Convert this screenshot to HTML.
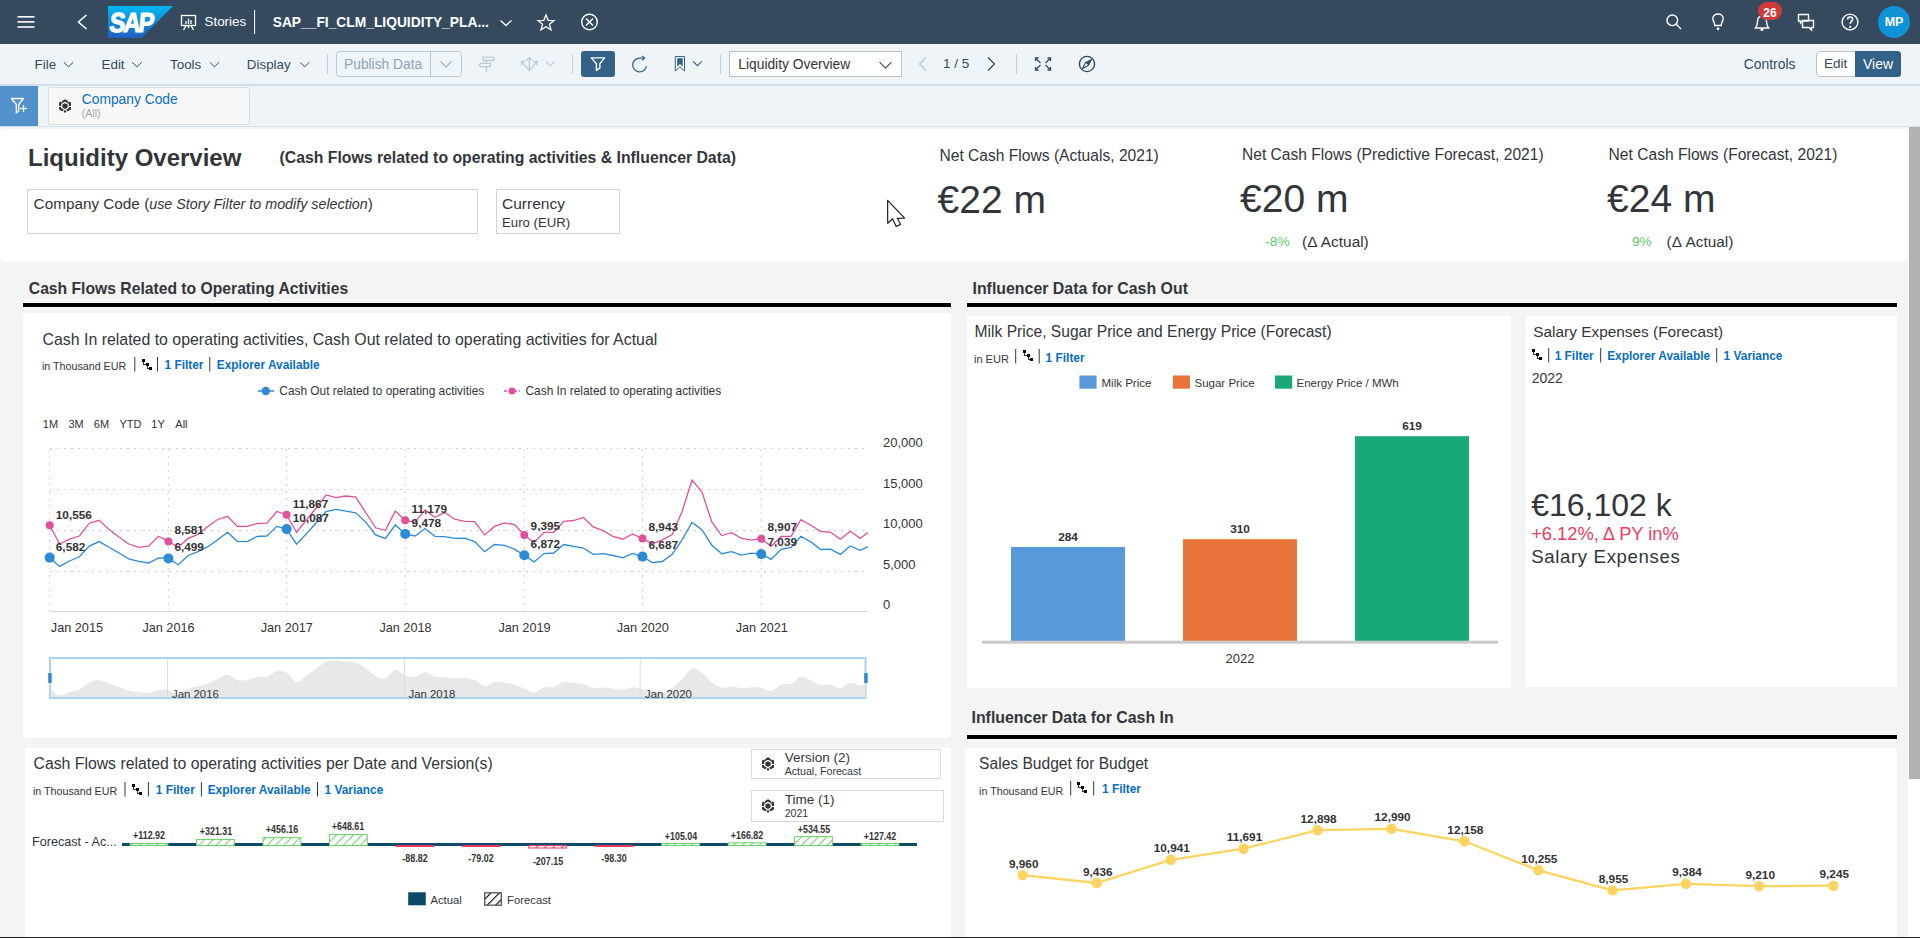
<!DOCTYPE html>
<html><head><meta charset="utf-8"><title>Liquidity Overview</title>
<style>
html,body{margin:0;padding:0;width:1920px;height:938px;overflow:hidden;background:#f4f4f4;}
body{position:relative;font-family:"Liberation Sans",sans-serif;color:#32363a;}
.t{position:absolute;white-space:nowrap;}
.r{position:absolute;}
svg text{font-family:"Liberation Sans",sans-serif;}
</style></head><body>
<div class="r" style="left:0px;top:0px;width:1920px;height:44px;background:#354a5f;"></div>
<svg class="r" style="left:0;top:0" width="1920" height="44" viewBox="0 0 1920 44">
<g stroke="#ffffff" stroke-width="1.6" fill="none" stroke-linecap="butt">
<line x1="17.5" y1="16.8" x2="34.5" y2="16.8"/><line x1="17.5" y1="21.9" x2="34.5" y2="21.9"/><line x1="17.5" y1="27" x2="34.5" y2="27"/>
<polyline points="86.5,15 78.5,22 86.5,29"/>
</g>
<defs><linearGradient id="sapg" x1="0" y1="0" x2="0" y2="1"><stop offset="0" stop-color="#00b8f1"/><stop offset="1" stop-color="#1e5fbf"/></linearGradient></defs>
<polygon points="108,6 173,6 141.5,38 108,38" fill="url(#sapg)"/>
<text x="0" y="0" font-family="Liberation Sans" font-weight="bold" font-size="27.5" fill="#fff" stroke="#fff" stroke-width="1.1" letter-spacing="-2.2" transform="translate(108.8,31.6) scale(0.86,1) skewX(-7)">SAP</text>
<!-- stories icon -->
<g stroke="#ffffff" stroke-width="1.3" fill="none">
<rect x="181.5" y="15.5" width="14" height="10"/>
<line x1="186" y1="25.5" x2="183.5" y2="30"/><line x1="191" y1="25.5" x2="193.5" y2="30"/><line x1="188.5" y1="25.5" x2="188.5" y2="28"/>
<line x1="186" y1="24" x2="186" y2="21"/><line x1="188.5" y1="24" x2="188.5" y2="18.5"/><line x1="191" y1="24" x2="191" y2="20"/>
</g>
<line x1="254.6" y1="10" x2="254.6" y2="34" stroke="#ffffff" stroke-width="1"/>
<polyline points="500.5,20.5 506,25.5 511.5,20.5" stroke="#ffffff" stroke-width="1.3" fill="none"/>
<polygon points="546,15 548.2,20.3 554,20.6 549.5,24.3 551,29.8 546,26.7 541,29.8 542.5,24.3 538,20.6 543.8,20.3" stroke="#ffffff" stroke-width="1.3" fill="none" stroke-linejoin="miter"/>
<circle cx="589.5" cy="22" r="7.8" stroke="#ffffff" stroke-width="1.4" fill="none"/>
<g stroke="#ffffff" stroke-width="1.5"><line x1="586" y1="18.5" x2="593" y2="25.5"/><line x1="593" y1="18.5" x2="586" y2="25.5"/></g>
<!-- right icons -->
<g stroke="#ffffff" stroke-width="1.4" fill="none">
<circle cx="1672.3" cy="20.3" r="5.3"/><line x1="1676" y1="24" x2="1681" y2="29"/>
<path d="M1714.8,25.5 C1714.8,22.5 1712.8,21 1712.8,18.5 C1712.8,15.8 1715.2,14 1718,14 C1720.8,14 1723.2,15.8 1723.2,18.5 C1723.2,21 1721.2,22.5 1721.2,25.5 Z"/>
<path d="M1755.5,28 L1768.5,28 C1767,26 1766.5,24.5 1766.5,21.5 C1766.5,18 1764.5,16.2 1762,16.2 C1759.5,16.2 1757.5,18 1757.5,21.5 C1757.5,24.5 1757,26 1755.5,28 Z"/>
<path d="M1798.5,14.5 h10 v6.5 h-6 l-2,2 v-2 h-2 z"/>
<path d="M1802.5,20.5 h11 v7 h-2 v2.5 l-2.5,-2.5 h-6.5 z"/>
<circle cx="1850" cy="22" r="7.9"/>
<path d="M1847.6,19.6 C1847.6,17.9 1848.7,17 1850.1,17 C1851.6,17 1852.6,18 1852.6,19.3 C1852.6,21.2 1850.2,21.5 1850.2,23.8" stroke-width="1.7"/>
</g>
<circle cx="1718" cy="28.8" r="1.4" fill="#ffffff"/>
<circle cx="1762" cy="29.5" r="1.5" fill="#ffffff"/>
<circle cx="1850.2" cy="26.8" r="1.1" fill="#ffffff"/>
<rect x="1758" y="2" width="24" height="18" rx="9" fill="#d13a3a"/>
<circle cx="1894" cy="22" r="16" fill="#0f93d6"/>
</svg>
<div class="t" style="left:204.5px;top:15.25px;font-size:13.4px;line-height:13.4px;color:#fff;">Stories</div>
<div class="t" style="left:272.7px;top:16.10px;font-size:13.8px;line-height:13.8px;color:#fff;font-weight:bold;">SAP__FI_CLM_LIQUIDITY_PLA...</div>
<div class="t" style="left:1570.0px;width:400px;text-align:center;top:7.23px;font-size:12px;line-height:12px;color:#fff;font-weight:bold;">26</div>
<div class="t" style="left:1694.0px;width:400px;text-align:center;top:15.87px;font-size:12.5px;line-height:12.5px;color:#fff;font-weight:bold;">MP</div>
<div class="r" style="left:0px;top:44px;width:1920px;height:42px;background:#eff4f9;border-bottom:2px solid #d2deea;box-sizing:border-box;"></div>
<div class="t" style="left:34.5px;top:57.85px;font-size:13.4px;line-height:13.4px;color:#354a5f;">File</div>
<div class="t" style="left:101.5px;top:57.85px;font-size:13.4px;line-height:13.4px;color:#354a5f;">Edit</div>
<div class="t" style="left:170.0px;top:57.85px;font-size:13.4px;line-height:13.4px;color:#354a5f;">Tools</div>
<div class="t" style="left:246.8px;top:57.85px;font-size:13.4px;line-height:13.4px;color:#354a5f;">Display</div>
<svg class="r" style="left:0;top:44px" width="1920" height="41" viewBox="0 44 1920 41">
<g stroke="#354a5f" stroke-width="1" fill="none">
<polyline points="63.8,62.3 68.5,66.8 73.2,62.3"/><polyline points="132.2,62.3 137,66.8 141.8,62.3"/><polyline points="209.9,62.3 214.5,66.8 219.1,62.3"/><polyline points="300.2,62.3 304.7,66.8 309.2,62.3"/>
</g>
<line x1="327.5" y1="54.5" x2="327.5" y2="74" stroke="#c5d2de" stroke-width="1"/>
<rect x="336.5" y="51.5" width="125" height="25" rx="3" fill="#eff4f9" stroke="#b8c8d8" stroke-width="1"/>
<line x1="430.5" y1="51.5" x2="430.5" y2="76.5" stroke="#b8c8d8" stroke-width="1"/>
<polyline points="440.5,61.5 446,67 451.5,61.5" stroke="#9db1c4" stroke-width="1.1" fill="none"/>
<!-- signpost -->
<g stroke="#bccbd9" stroke-width="1.3" fill="none">
<path d="M483.2,57.1 H493.2 L494.7,58.8 L493.2,60.5 H483.2 Z"/><path d="M490.4,63.3 H480.7 L479.2,65 L480.7,66.7 H490.4 Z"/>
<line x1="486.5" y1="60.5" x2="486.5" y2="63.3"/><line x1="486.5" y1="66.7" x2="486.5" y2="71.7"/>
</g>
<!-- move icon -->
<g stroke="#bccbd9" stroke-width="1.3" fill="none">
<line x1="529.3" y1="57.6" x2="529.3" y2="70.6"/><polyline points="526.4,60.5 529.3,57.6 532.2,60.5"/>
<line x1="529.3" y1="70.6" x2="521.7" y2="61.6"/><polyline points="521.4,65.6 521.4,61.3 525.7,61.3"/>
<line x1="529.3" y1="70.6" x2="536.9" y2="61.6"/><polyline points="532.9,61.3 537.2,61.3 537.2,65.6"/>
</g>
<polyline points="546,61.5 550.3,65.8 554.6,61.5" stroke="#bccbd9" stroke-width="1.1" fill="none"/>
<line x1="572.5" y1="54.5" x2="572.5" y2="74" stroke="#c5d2de" stroke-width="1"/>
<rect x="581" y="51" width="34" height="26" rx="3" fill="#346187"/>
<path d="M591.3,57.9 H604.6 L599.9,63.8 V67.9 L596.4,70.4 V63.8 Z" stroke="#fff" stroke-width="1.4" fill="none" stroke-linejoin="round"/>
<!-- refresh -->
<path d="M646.4,66.2 A6.9,6.9 0 1 1 639.6,58.1 H644.3" stroke="#346187" stroke-width="1.25" fill="none"/>
<polyline points="642.2,55.9 644.6,58.1 642.2,60.4" stroke="#346187" stroke-width="1.25" fill="none"/>
<!-- bookmark -->
<path d="M675.3,56.5 H684.5 V71 L679.9,66.9 L675.3,71 Z" stroke="#346187" stroke-width="1" fill="none"/>
<path d="M677.2,58.2 H682.7 V66.6 L679.95,64.1 L677.2,66.6 Z" fill="#346187"/>
<polyline points="693,61.3 697.4,65.7 701.8,61.3" stroke="#346187" stroke-width="1.1" fill="none"/>
<line x1="720.5" y1="54.5" x2="720.5" y2="74" stroke="#c5d2de" stroke-width="1"/>
<rect x="729.5" y="51.5" width="172" height="25" fill="#fff" stroke="#bfbfbf" stroke-width="1"/>
<polyline points="879.5,62 885.5,68 891.5,62" stroke="#32363a" stroke-width="1.05" fill="none"/>
<polyline points="926,57.5 919.5,64 926,70.5" stroke="#b9c6d3" stroke-width="1.2" fill="none"/>
<polyline points="988,57.5 994.5,64 988,70.5" stroke="#354a5f" stroke-width="1.2" fill="none"/>
<line x1="1016.5" y1="54.5" x2="1016.5" y2="74" stroke="#c5d2de" stroke-width="1"/>
<!-- fullscreen -->
<g stroke="#354a5f" stroke-width="1.3" fill="none">
<polyline points="1035.5,61 1035.5,58 1038.5,58"/><polyline points="1047.5,58 1050.5,58 1050.5,61"/>
<polyline points="1035.5,67 1035.5,70 1038.5,70"/><polyline points="1047.5,70 1050.5,70 1050.5,67"/>
<line x1="1036" y1="58.5" x2="1040.5" y2="63"/><line x1="1050" y1="58.5" x2="1045.5" y2="63"/>
<line x1="1036" y1="69.5" x2="1040.5" y2="65"/><line x1="1050" y1="69.5" x2="1045.5" y2="65"/>
</g>
<!-- compass -->
<circle cx="1087" cy="64" r="7.6" stroke="#354a5f" stroke-width="1.4" fill="none"/>
<path d="M1091.5,59.5 L1088.6,65.2 L1082.5,68.5 L1085.4,62.8 Z" stroke="#354a5f" stroke-width="1.1" fill="none" stroke-linejoin="round"/><path d="M1091.5,59.5 L1088.6,65.2 L1085.4,62.8 Z" fill="#354a5f"/>
<rect x="1816.5" y="51.5" width="84" height="25" rx="3.5" fill="#fff" stroke="#bfbfbf" stroke-width="1"/>
<path d="M1855,51 h42.5 a3.5,3.5 0 0 1 3.5,3.5 v19 a3.5,3.5 0 0 1 -3.5,3.5 h-42.5 z" fill="#346187"/>
</svg>
<div class="t" style="left:344.0px;top:58.00px;font-size:13.8px;line-height:13.8px;color:#8fa3b7;">Publish Data</div>
<div class="t" style="left:738.3px;top:58.20px;font-size:13.8px;line-height:13.8px;color:#32363a;">Liquidity Overview</div>
<div class="t" style="left:943.0px;top:57.24px;font-size:13.5px;line-height:13.5px;color:#354a5f;">1 / 5</div>
<div class="t" style="left:1743.7px;top:57.79px;font-size:13.9px;line-height:13.9px;color:#354a5f;">Controls</div>
<div class="t" style="left:1824.0px;top:57.04px;font-size:13.5px;line-height:13.5px;color:#354a5f;">Edit</div>
<div class="t" style="left:1863.0px;top:56.97px;font-size:14px;line-height:14px;color:#fff;">View</div>
<div class="r" style="left:0px;top:86px;width:1920px;height:41px;background:#eff4f9;border-bottom:1px solid #d5e1ec;box-sizing:border-box;"></div>
<div class="r" style="left:0px;top:86px;width:38px;height:40px;background:#5391cd;"></div>
<svg class="r" style="left:0;top:85px" width="260" height="41" viewBox="0 85 260 41">
<path d="M11.5,98.5 h12 l-4.8,6 v6.5 l-2.4,1.8 v-8.3 z" stroke="#fff" stroke-width="1.3" fill="none" stroke-linejoin="round"/>
<g stroke="#fff" stroke-width="1.3"><line x1="20" y1="108.5" x2="27" y2="108.5"/><line x1="23.5" y1="105" x2="23.5" y2="112"/></g>
<rect x="48.5" y="87.5" width="201" height="37" rx="2" fill="#f7f7f7" stroke="#dedede" stroke-width="1"/>
</svg>
<svg class="r" style="left:57.2px;top:97.7px" width="16" height="16" viewBox="-8 -8 16 16">
<path d="M0,-5.6 L4.9,-2.8 L4.9,2.8 L0,5.6 L-4.9,2.8 L-4.9,-2.8 Z" fill="none" stroke="#32363a" stroke-width="2.2"/>
<g stroke="#fff" stroke-width="1.1"><line x1="-2.5" y1="-6.5" x2="-4" y2="-3.8"/><line x1="2.5" y1="-6.5" x2="4" y2="-3.8"/><line x1="-6" y1="0.5" x2="-3.5" y2="0.5"/><line x1="6" y1="0.5" x2="3.5" y2="0.5"/><line x1="-2.5" y1="6.5" x2="-1" y2="4"/><line x1="2.5" y1="6.5" x2="1" y2="4"/></g>
<path d="M0,-2.8 L2.6,-1.4 L2.6,1.6 L0,3 L-2.6,1.6 L-2.6,-1.4 Z" fill="#32363a"/>
</svg>
<div class="t" style="left:81.8px;top:92.50px;font-size:13.8px;line-height:13.8px;color:#0a6ec0;">Company Code</div>
<div class="t" style="left:81.8px;top:108.13px;font-size:10.5px;line-height:10.5px;color:#a5a5a5;">(All)</div>
<div class="r" style="left:0px;top:127px;width:1920px;height:811px;background:#f4f4f4;"></div>
<div class="r" style="left:0px;top:129px;width:1908px;height:133px;background:#fff;border-radius:5px;"></div>
<div class="t" style="left:28.0px;top:146.07px;font-size:24px;line-height:24px;color:#32363a;font-weight:bold;">Liquidity Overview</div>
<div class="t" style="left:279.5px;top:149.94px;font-size:15.8px;line-height:15.8px;color:#32363a;font-weight:bold;">(Cash Flows related to operating activities &amp; Influencer Data)</div>
<div class="r" style="left:27px;top:189px;width:451px;height:45px;border:1px solid #d4d4d4;box-sizing:border-box;background:#fff;"></div>
<div class="t" style="left:33.6px;top:196.40px;font-size:15.3px;line-height:15.3px;color:#32363a;">Company Code (<i style="font-size:14.3px">use Story Filter to modify selection</i>)</div>
<div class="r" style="left:496px;top:189px;width:124px;height:45px;border:1px solid #d4d4d4;box-sizing:border-box;background:#fff;"></div>
<div class="t" style="left:502.0px;top:196.28px;font-size:15.5px;line-height:15.5px;color:#32363a;">Currency</div>
<div class="t" style="left:502.0px;top:216.08px;font-size:13.2px;line-height:13.2px;color:#32363a;">Euro (EUR)</div>
<div class="t" style="left:939.5px;top:148.16px;font-size:15.6px;line-height:15.6px;color:#32363a;">Net Cash Flows (Actuals, 2021)</div>
<div class="t" style="left:937.5px;top:179.91px;font-size:39px;line-height:39px;color:#32363a;">€22 m</div>
<div class="t" style="left:1242.0px;top:147.36px;font-size:15.6px;line-height:15.6px;color:#32363a;">Net Cash Flows (Predictive Forecast, 2021)</div>
<div class="t" style="left:1240.0px;top:179.21px;font-size:39px;line-height:39px;color:#32363a;">€20 m</div>
<div class="t" style="left:1265.3px;top:234.53px;font-size:13.6px;line-height:13.6px;color:#5dc86a;">-8%</div>
<div class="t" style="left:1302.0px;top:234.29px;font-size:15.4px;line-height:15.4px;color:#32363a;">(Δ Actual)</div>
<div class="t" style="left:1608.6px;top:147.36px;font-size:15.6px;line-height:15.6px;color:#32363a;">Net Cash Flows (Forecast, 2021)</div>
<div class="t" style="left:1607.0px;top:179.21px;font-size:39px;line-height:39px;color:#32363a;">€24 m</div>
<div class="t" style="left:1632.0px;top:234.53px;font-size:13.6px;line-height:13.6px;color:#5dc86a;">9%</div>
<div class="t" style="left:1666.6px;top:234.29px;font-size:15.4px;line-height:15.4px;color:#32363a;">(Δ Actual)</div>
<svg class="r" style="left:884px;top:197px" width="24" height="32" viewBox="0 0 24 32">
<path d="M3.6,3.4 L3.7,26.2 L8.6,21.8 L12.2,29.4 L16.6,27.5 L13.4,21.3 L20.6,21.1 Z" fill="#fff" stroke="#1e1e28" stroke-width="1.2" stroke-linejoin="round"/></svg>
<div class="r" style="left:1908px;top:127px;width:12px;height:811px;background:#fff;"></div>
<div class="r" style="left:1909px;top:127px;width:11px;height:652px;background:#b2b2b2;"></div>
<div class="t" style="left:28.8px;top:281.15px;font-size:15.7px;line-height:15.7px;color:#32363a;font-weight:bold;">Cash Flows Related to Operating Activities</div>
<div class="r" style="left:22px;top:302px;width:930px;height:6px;background:#000;border:1px solid #fff;box-sizing:border-box;"></div>
<div class="r" style="left:23px;top:313px;width:928px;height:425px;background:#fff;border-radius:4px;"></div>
<div class="t" style="left:42.5px;top:332.43px;font-size:15.9px;line-height:15.9px;color:#32363a;">Cash In related to operating activities, Cash Out related to operating activities for Actual</div>
<div class="t" style="left:42.0px;top:361.40px;font-size:10.7px;line-height:10.7px;color:#32363a;">in Thousand EUR</div>
<svg class="r" style="left:114.5px;top:349.5px" width="600" height="30" viewBox="114.5 349.5 600 30">
<line x1="134.3" y1="356.5" x2="134.3" y2="371.0" stroke="#32363a" stroke-width="1"/>
<line x1="157.0" y1="356.5" x2="157.0" y2="371.0" stroke="#32363a" stroke-width="1"/>
<line x1="209.3" y1="356.5" x2="209.3" y2="371.0" stroke="#32363a" stroke-width="1"/>
<g fill="#000" shape-rendering="crispEdges"><rect x="141" y="358" width="3" height="3"/><rect x="145" y="362" width="3" height="3"/><rect x="148" y="366" width="3" height="3"/></g><g stroke="#333" stroke-width="1" fill="none" shape-rendering="crispEdges"><polyline points="142.5,361 142.5,363.5 145,363.5"/><polyline points="146.5,365 146.5,367.5 148,367.5"/></g>
</svg>
<div class="t" style="left:164.5px;top:359.85px;font-size:11.9px;line-height:11.9px;color:#0a6ec0;font-weight:bold;">1 Filter</div>
<div class="t" style="left:216.8px;top:359.85px;font-size:11.9px;line-height:11.9px;color:#0a6ec0;font-weight:bold;">Explorer Available</div>
<svg class="r" style="left:250px;top:382px" width="480" height="18" viewBox="250 382 480 18">
<line x1="258" y1="391" x2="274" y2="391" stroke="#2d8ad6" stroke-width="1.5"/><circle cx="265.8" cy="391" r="4.2" fill="#2d8ad6"/>
<line x1="504" y1="391" x2="520" y2="391" stroke="#e0519d" stroke-width="1.5" stroke-dasharray="3 2"/><circle cx="512" cy="391" r="3.6" fill="#e0519d"/>
</svg>
<div class="t" style="left:279.3px;top:386.25px;font-size:11.9px;line-height:11.9px;color:#32363a;">Cash Out related to operating activities</div>
<div class="t" style="left:525.5px;top:386.25px;font-size:11.9px;line-height:11.9px;color:#32363a;">Cash In related to operating activities</div>
<div class="t" style="left:42.8px;top:418.76px;font-size:11px;line-height:11px;color:#333;">1M</div>
<div class="t" style="left:68.5px;top:418.76px;font-size:11px;line-height:11px;color:#333;">3M</div>
<div class="t" style="left:93.8px;top:418.76px;font-size:11px;line-height:11px;color:#333;">6M</div>
<div class="t" style="left:119.5px;top:418.76px;font-size:11px;line-height:11px;color:#333;">YTD</div>
<div class="t" style="left:151.3px;top:418.76px;font-size:11px;line-height:11px;color:#333;">1Y</div>
<div class="t" style="left:175.3px;top:418.76px;font-size:11px;line-height:11px;color:#333;">All</div>
<svg class="r" style="left:23px;top:430px" width="928" height="280" viewBox="23 430 928 280">
<line x1="50" y1="448.5" x2="864" y2="448.5" stroke="#cfcfcf" stroke-width="1" stroke-dasharray="2 5"/>
<line x1="50" y1="489.5" x2="864" y2="489.5" stroke="#cfcfcf" stroke-width="1" stroke-dasharray="2 5"/>
<line x1="50" y1="530.5" x2="864" y2="530.5" stroke="#cfcfcf" stroke-width="1" stroke-dasharray="2 5"/>
<line x1="50" y1="571.5" x2="864" y2="571.5" stroke="#cfcfcf" stroke-width="1" stroke-dasharray="2 5"/>
<line x1="49.7" y1="449" x2="49.7" y2="611" stroke="#cfcfcf" stroke-width="1" stroke-dasharray="2 5"/>
<line x1="168.4" y1="449" x2="168.4" y2="611" stroke="#cfcfcf" stroke-width="1" stroke-dasharray="2 5"/>
<line x1="286.6" y1="449" x2="286.6" y2="611" stroke="#cfcfcf" stroke-width="1" stroke-dasharray="2 5"/>
<line x1="405.2" y1="449" x2="405.2" y2="611" stroke="#cfcfcf" stroke-width="1" stroke-dasharray="2 5"/>
<line x1="524.3" y1="449" x2="524.3" y2="611" stroke="#cfcfcf" stroke-width="1" stroke-dasharray="2 5"/>
<line x1="642.5" y1="449" x2="642.5" y2="611" stroke="#cfcfcf" stroke-width="1" stroke-dasharray="2 5"/>
<line x1="761.3" y1="449" x2="761.3" y2="611" stroke="#cfcfcf" stroke-width="1" stroke-dasharray="2 5"/>
<line x1="49.5" y1="611.5" x2="868" y2="611.5" stroke="#dadada" stroke-width="1"/>
<polyline fill="none" stroke="#e0519d" stroke-width="1.3" points="49.7,525.3 59.6,544.0 69.5,539.2 79.4,536.0 89.3,523.2 99.2,520.3 109.1,529.6 118.9,537.0 128.8,544.0 138.7,547.4 148.6,546.1 158.5,536.2 168.4,541.4 178.2,547.2 188.1,538.4 198.0,534.4 207.8,526.4 217.7,519.5 227.5,516.3 237.4,526.4 247.2,526.4 257.1,523.5 266.9,523.2 276.8,511.5 286.6,514.7 296.5,532.3 306.4,520.0 316.2,508.0 326.1,494.9 336.0,497.6 345.9,496.0 355.8,497.1 365.7,512.5 375.6,527.8 385.4,530.3 395.3,511.1 405.2,520.3 415.1,522.1 425.0,509.9 435.0,517.3 444.9,512.5 454.8,519.2 464.8,521.4 474.7,521.6 484.6,534.9 494.5,526.4 504.4,522.9 514.4,524.6 524.3,534.9 534.1,542.4 544.0,532.3 553.8,532.3 563.7,521.4 573.5,520.5 583.4,517.5 593.2,526.9 603.1,530.7 613.0,536.5 622.8,539.2 632.6,533.9 642.5,538.6 652.4,543.8 662.3,539.9 672.2,534.5 682.1,511.6 692.0,480.1 701.9,491.9 711.8,522.0 721.7,535.6 731.6,532.7 741.5,538.3 751.4,540.2 761.3,538.7 771.2,546.3 781.1,536.5 791.0,536.3 800.9,519.7 810.8,525.3 820.6,531.4 830.5,532.3 840.4,539.2 850.3,531.2 860.2,538.4 867.8,532.5"/>
<polyline fill="none" stroke="#2d8ad6" stroke-width="1.3" points="49.7,557.6 59.6,566.4 69.5,561.0 79.4,556.8 89.3,546.1 99.2,541.6 109.1,547.2 118.9,553.0 128.8,558.9 138.7,561.3 148.6,563.0 158.5,557.9 168.4,558.4 178.2,564.8 188.1,555.5 198.0,551.7 207.8,546.7 217.7,539.7 227.5,532.3 237.4,541.3 247.2,541.6 257.1,536.5 266.9,536.0 276.8,526.4 286.6,529.1 296.5,544.2 306.4,533.9 316.2,522.7 326.1,511.5 336.0,509.3 345.9,511.1 355.8,512.8 365.7,522.1 375.6,534.9 385.4,538.4 395.3,524.8 405.2,533.9 415.1,536.0 425.0,528.5 435.0,536.3 444.9,536.7 454.8,538.4 464.8,538.1 474.7,541.6 484.6,551.7 494.5,544.5 504.4,545.3 514.4,549.1 524.3,555.2 534.1,561.9 544.0,553.6 553.8,553.0 563.7,544.5 573.5,546.3 583.4,548.0 593.2,554.4 603.1,553.6 613.0,555.5 622.8,557.8 632.6,553.4 642.5,556.6 652.4,562.6 662.3,561.5 672.2,554.2 682.1,539.9 692.0,522.5 701.9,529.7 711.8,545.2 721.7,553.7 731.6,551.6 741.5,555.1 751.4,553.2 761.3,554.1 771.2,559.4 781.1,549.3 791.0,547.4 800.9,536.3 810.8,541.9 820.6,549.5 830.5,549.1 840.4,554.4 850.3,545.9 860.2,550.4 867.8,546.7"/>
<circle cx="49.7" cy="525.3" r="4" fill="#e0519d"/>
<circle cx="49.7" cy="557.6" r="5" fill="#2d8ad6"/>
<circle cx="168.4" cy="541.4" r="4" fill="#e0519d"/>
<circle cx="168.4" cy="558.4" r="5" fill="#2d8ad6"/>
<circle cx="286.6" cy="514.7" r="4" fill="#e0519d"/>
<circle cx="286.6" cy="529.1" r="5" fill="#2d8ad6"/>
<circle cx="405.2" cy="520.3" r="4" fill="#e0519d"/>
<circle cx="405.2" cy="533.9" r="5" fill="#2d8ad6"/>
<circle cx="524.3" cy="534.9" r="4" fill="#e0519d"/>
<circle cx="524.3" cy="555.2" r="5" fill="#2d8ad6"/>
<circle cx="642.5" cy="538.6" r="4" fill="#e0519d"/>
<circle cx="642.5" cy="556.6" r="5" fill="#2d8ad6"/>
<circle cx="761.3" cy="538.7" r="4" fill="#e0519d"/>
<circle cx="761.3" cy="554.1" r="5" fill="#2d8ad6"/>
<rect x="50" y="658" width="815.5" height="40" fill="#fff" stroke="#a9d3f2" stroke-width="2"/>
<path d="M50.5,689.9 C52.0,690.8 56.4,694.9 59.6,695.2 C62.8,695.6 66.2,692.9 69.5,691.9 C72.8,691.0 76.1,690.9 79.4,689.4 C82.7,687.9 86.0,684.4 89.3,682.9 C92.6,681.3 95.9,680.0 99.2,680.1 C102.5,680.2 105.8,682.4 109.1,683.5 C112.3,684.7 115.6,685.9 118.9,687.1 C122.2,688.3 125.5,689.8 128.8,690.7 C132.1,691.5 135.4,691.7 138.7,692.1 C142.0,692.5 145.3,693.5 148.6,693.2 C151.9,692.8 155.2,690.5 158.5,690.1 C161.8,689.6 165.1,689.7 168.4,690.4 C171.7,691.1 175.0,694.6 178.2,694.3 C181.5,694.0 184.8,689.9 188.1,688.6 C191.4,687.3 194.7,687.2 198.0,686.3 C201.2,685.4 204.5,684.5 207.8,683.2 C211.1,682.0 214.4,680.4 217.7,679.0 C220.9,677.5 224.2,674.3 227.5,674.5 C230.8,674.6 234.1,679.0 237.4,680.0 C240.6,680.9 243.9,680.6 247.2,680.1 C250.5,679.6 253.8,677.6 257.1,677.0 C260.3,676.5 263.6,677.7 266.9,676.7 C270.2,675.7 273.5,671.6 276.8,670.9 C280.0,670.2 283.3,670.7 286.6,672.5 C289.9,674.3 293.2,681.2 296.5,681.7 C299.8,682.2 303.1,677.6 306.4,675.4 C309.7,673.3 313.0,670.9 316.2,668.6 C319.5,666.4 322.8,663.2 326.1,661.8 C329.4,660.4 332.7,660.5 336.0,660.5 C339.3,660.4 342.6,661.2 345.9,661.6 C349.2,661.9 352.5,661.5 355.8,662.6 C359.1,663.7 362.4,666.0 365.7,668.3 C369.0,670.5 372.3,674.4 375.6,676.1 C378.8,677.7 382.1,679.2 385.4,678.2 C388.7,677.2 392.0,670.4 395.3,669.9 C398.6,669.4 401.9,674.3 405.2,675.4 C408.5,676.6 411.8,677.3 415.1,676.7 C418.4,676.2 421.7,672.1 425.0,672.2 C428.4,672.2 431.7,676.1 435.0,676.9 C438.3,677.7 441.6,676.9 444.9,677.2 C448.2,677.4 451.5,678.0 454.8,678.2 C458.1,678.3 461.4,677.7 464.8,678.0 C468.1,678.3 471.4,678.8 474.7,680.1 C478.0,681.5 481.3,686.0 484.6,686.3 C487.9,686.6 491.2,682.6 494.5,681.9 C497.8,681.3 501.1,681.9 504.4,682.4 C507.8,682.9 511.1,683.7 514.4,684.7 C517.7,685.7 521.0,687.1 524.3,688.4 C527.6,689.7 530.9,692.7 534.1,692.5 C537.4,692.3 540.7,688.3 544.0,687.4 C547.3,686.5 550.6,688.0 553.8,687.1 C557.1,686.2 560.4,682.6 563.7,681.9 C567.0,681.2 570.3,682.6 573.5,683.0 C576.8,683.4 580.1,683.2 583.4,684.0 C586.7,684.9 590.0,687.4 593.2,687.9 C596.5,688.5 599.8,687.3 603.1,687.4 C606.4,687.6 609.7,688.2 613.0,688.6 C616.2,689.0 619.5,690.2 622.8,690.0 C626.1,689.8 629.4,687.4 632.6,687.3 C635.9,687.2 639.2,688.3 642.5,689.3 C645.8,690.2 649.1,692.4 652.4,692.9 C655.7,693.4 659.0,693.1 662.3,692.3 C665.6,691.4 668.9,690.0 672.2,687.8 C675.5,685.6 678.8,682.3 682.1,679.1 C685.4,675.9 688.7,669.5 692.0,668.5 C695.3,667.5 698.6,670.6 701.9,672.9 C705.2,675.2 708.5,679.9 711.8,682.3 C715.1,684.8 718.4,686.9 721.7,687.5 C725.0,688.2 728.3,686.1 731.6,686.2 C734.9,686.4 738.2,688.2 741.5,688.4 C744.8,688.5 748.1,687.3 751.4,687.2 C754.7,687.1 758.0,687.1 761.3,687.7 C764.6,688.4 767.9,691.5 771.2,691.0 C774.5,690.5 777.8,686.0 781.1,684.8 C784.4,683.6 787.7,685.0 791.0,683.7 C794.3,682.3 797.6,677.5 800.9,676.9 C804.2,676.3 807.5,679.0 810.8,680.3 C814.0,681.7 817.3,684.2 820.6,684.9 C823.9,685.7 827.2,684.2 830.5,684.7 C833.8,685.2 837.1,688.3 840.4,687.9 C843.7,687.6 847.0,683.2 850.3,682.8 C853.6,682.3 857.7,685.4 860.2,685.5 C862.7,685.6 864.6,683.6 865.5,683.2 L865.5,697 L50.5,697 Z" fill="#e8e8e8"/>
<line x1="167.6" y1="659" x2="167.6" y2="697" stroke="#dcdcdc" stroke-width="1"/>
<line x1="404.6" y1="659" x2="404.6" y2="697" stroke="#dcdcdc" stroke-width="1"/>
<line x1="640.2" y1="659" x2="640.2" y2="697" stroke="#dcdcdc" stroke-width="1"/>
<rect x="48.2" y="673" width="3.5" height="10" fill="#2d8ad6"/>
<rect x="864.2" y="673" width="3.5" height="10" fill="#2d8ad6"/>
</svg>
<div class="t" style="left:55.8px;top:509.76px;font-size:11.8px;line-height:11.8px;color:#333;font-weight:bold;">10,556</div>
<div class="t" style="left:55.8px;top:541.56px;font-size:11.8px;line-height:11.8px;color:#333;font-weight:bold;">6,582</div>
<div class="t" style="left:174.4px;top:524.86px;font-size:11.8px;line-height:11.8px;color:#333;font-weight:bold;">8,581</div>
<div class="t" style="left:174.4px;top:541.56px;font-size:11.8px;line-height:11.8px;color:#333;font-weight:bold;">6,499</div>
<div class="t" style="left:292.8px;top:498.56px;font-size:11.8px;line-height:11.8px;color:#333;font-weight:bold;">11,867</div>
<div class="t" style="left:292.8px;top:512.86px;font-size:11.8px;line-height:11.8px;color:#333;font-weight:bold;">10,087</div>
<div class="t" style="left:411.6px;top:503.56px;font-size:11.8px;line-height:11.8px;color:#333;font-weight:bold;">11,179</div>
<div class="t" style="left:411.6px;top:517.56px;font-size:11.8px;line-height:11.8px;color:#333;font-weight:bold;">9,478</div>
<div class="t" style="left:530.6px;top:520.66px;font-size:11.8px;line-height:11.8px;color:#333;font-weight:bold;">9,395</div>
<div class="t" style="left:530.6px;top:538.56px;font-size:11.8px;line-height:11.8px;color:#333;font-weight:bold;">6,872</div>
<div class="t" style="left:648.5px;top:521.56px;font-size:11.8px;line-height:11.8px;color:#333;font-weight:bold;">8,943</div>
<div class="t" style="left:648.5px;top:540.26px;font-size:11.8px;line-height:11.8px;color:#333;font-weight:bold;">6,687</div>
<div class="t" style="left:767.5px;top:521.66px;font-size:11.8px;line-height:11.8px;color:#333;font-weight:bold;">8,907</div>
<div class="t" style="left:767.5px;top:536.66px;font-size:11.8px;line-height:11.8px;color:#333;font-weight:bold;">7,039</div>
<div class="t" style="left:50.8px;top:621.94px;font-size:12.7px;line-height:12.7px;color:#333;">Jan 2015</div>
<div class="t" style="left:-31.5px;width:400px;text-align:center;top:621.94px;font-size:12.7px;line-height:12.7px;color:#333;">Jan 2016</div>
<div class="t" style="left:86.8px;width:400px;text-align:center;top:621.94px;font-size:12.7px;line-height:12.7px;color:#333;">Jan 2017</div>
<div class="t" style="left:205.5px;width:400px;text-align:center;top:621.94px;font-size:12.7px;line-height:12.7px;color:#333;">Jan 2018</div>
<div class="t" style="left:324.5px;width:400px;text-align:center;top:621.94px;font-size:12.7px;line-height:12.7px;color:#333;">Jan 2019</div>
<div class="t" style="left:442.8px;width:400px;text-align:center;top:621.94px;font-size:12.7px;line-height:12.7px;color:#333;">Jan 2020</div>
<div class="t" style="left:561.8px;width:400px;text-align:center;top:621.94px;font-size:12.7px;line-height:12.7px;color:#333;">Jan 2021</div>
<div class="t" style="left:883.0px;top:435.90px;font-size:13px;line-height:13px;color:#333;">20,000</div>
<div class="t" style="left:883.0px;top:477.00px;font-size:13px;line-height:13px;color:#333;">15,000</div>
<div class="t" style="left:883.0px;top:516.90px;font-size:13px;line-height:13px;color:#333;">10,000</div>
<div class="t" style="left:883.0px;top:558.00px;font-size:13px;line-height:13px;color:#333;">5,000</div>
<div class="t" style="left:883.0px;top:597.90px;font-size:13px;line-height:13px;color:#333;">0</div>
<div class="t" style="left:172.0px;top:688.81px;font-size:11.4px;line-height:11.4px;color:#333;">Jan 2016</div>
<div class="t" style="left:408.5px;top:688.81px;font-size:11.4px;line-height:11.4px;color:#333;">Jan 2018</div>
<div class="t" style="left:645.0px;top:688.81px;font-size:11.4px;line-height:11.4px;color:#333;">Jan 2020</div>
<div class="r" style="left:25px;top:748px;width:926px;height:190px;background:#fff;border-radius:3px 3px 0 0;"></div>
<div class="t" style="left:33.5px;top:756.34px;font-size:15.8px;line-height:15.8px;color:#32363a;">Cash Flows related to operating activities per Date and Version(s)</div>
<div class="t" style="left:33.0px;top:785.90px;font-size:10.7px;line-height:10.7px;color:#32363a;">in Thousand EUR</div>
<svg class="r" style="left:105.5px;top:774.5px" width="600" height="30" viewBox="105.5 774.5 600 30">
<line x1="124.5" y1="781.5" x2="124.5" y2="796.0" stroke="#32363a" stroke-width="1"/>
<line x1="147.9" y1="781.5" x2="147.9" y2="796.0" stroke="#32363a" stroke-width="1"/>
<line x1="200.9" y1="781.5" x2="200.9" y2="796.0" stroke="#32363a" stroke-width="1"/>
<line x1="317.0" y1="781.5" x2="317.0" y2="796.0" stroke="#32363a" stroke-width="1"/>
<g fill="#000" shape-rendering="crispEdges"><rect x="131" y="783" width="3" height="3"/><rect x="135" y="787" width="3" height="3"/><rect x="138" y="791" width="3" height="3"/></g><g stroke="#333" stroke-width="1" fill="none" shape-rendering="crispEdges"><polyline points="132.5,786 132.5,788.5 135,788.5"/><polyline points="136.5,790 136.5,792.5 138,792.5"/></g>
</svg>
<div class="t" style="left:155.8px;top:784.85px;font-size:11.9px;line-height:11.9px;color:#0a6ec0;font-weight:bold;">1 Filter</div>
<div class="t" style="left:207.7px;top:784.85px;font-size:11.9px;line-height:11.9px;color:#0a6ec0;font-weight:bold;">Explorer Available</div>
<div class="t" style="left:324.5px;top:784.85px;font-size:11.9px;line-height:11.9px;color:#0a6ec0;font-weight:bold;">1 Variance</div>
<div class="r" style="left:751px;top:749px;width:190px;height:30px;border:1px solid #dadada;box-sizing:border-box;"></div>
<div class="r" style="left:751px;top:790px;width:193px;height:32px;border:1px solid #dadada;box-sizing:border-box;"></div>
<svg class="r" style="left:760.2px;top:755.8px" width="16" height="16" viewBox="-8 -8 16 16">
<path d="M0,-5.6 L4.9,-2.8 L4.9,2.8 L0,5.6 L-4.9,2.8 L-4.9,-2.8 Z" fill="none" stroke="#32363a" stroke-width="2.2"/>
<g stroke="#fff" stroke-width="1.1"><line x1="-2.5" y1="-6.5" x2="-4" y2="-3.8"/><line x1="2.5" y1="-6.5" x2="4" y2="-3.8"/><line x1="-6" y1="0.5" x2="-3.5" y2="0.5"/><line x1="6" y1="0.5" x2="3.5" y2="0.5"/><line x1="-2.5" y1="6.5" x2="-1" y2="4"/><line x1="2.5" y1="6.5" x2="1" y2="4"/></g>
<path d="M0,-2.8 L2.6,-1.4 L2.6,1.6 L0,3 L-2.6,1.6 L-2.6,-1.4 Z" fill="#32363a"/>
</svg>
<svg class="r" style="left:760.2px;top:797.8px" width="16" height="16" viewBox="-8 -8 16 16">
<path d="M0,-5.6 L4.9,-2.8 L4.9,2.8 L0,5.6 L-4.9,2.8 L-4.9,-2.8 Z" fill="none" stroke="#32363a" stroke-width="2.2"/>
<g stroke="#fff" stroke-width="1.1"><line x1="-2.5" y1="-6.5" x2="-4" y2="-3.8"/><line x1="2.5" y1="-6.5" x2="4" y2="-3.8"/><line x1="-6" y1="0.5" x2="-3.5" y2="0.5"/><line x1="6" y1="0.5" x2="3.5" y2="0.5"/><line x1="-2.5" y1="6.5" x2="-1" y2="4"/><line x1="2.5" y1="6.5" x2="1" y2="4"/></g>
<path d="M0,-2.8 L2.6,-1.4 L2.6,1.6 L0,3 L-2.6,1.6 L-2.6,-1.4 Z" fill="#32363a"/>
</svg>
<div class="t" style="left:784.7px;top:750.74px;font-size:13.5px;line-height:13.5px;color:#32363a;">Version (2)</div>
<div class="t" style="left:784.7px;top:766.02px;font-size:10.6px;line-height:10.6px;color:#32363a;">Actual, Forecast</div>
<div class="t" style="left:784.7px;top:792.54px;font-size:13.5px;line-height:13.5px;color:#32363a;">Time (1)</div>
<div class="t" style="left:784.7px;top:807.62px;font-size:10.6px;line-height:10.6px;color:#32363a;">2021</div>
<div class="t" style="left:32.1px;top:836.36px;font-size:12.6px;line-height:12.6px;color:#32363a;">Forecast - Ac...</div>
<svg class="r" style="left:25px;top:815px" width="926" height="100" viewBox="25 815 926 100">
<defs>
<pattern id="hg" patternUnits="userSpaceOnUse" width="6" height="6" patternTransform="rotate(45)"><rect width="6" height="6" fill="#fff"/><line x1="0" y1="0" x2="0" y2="6" stroke="#6cd26a" stroke-width="2"/></pattern>
<pattern id="hr" patternUnits="userSpaceOnUse" width="6" height="6" patternTransform="rotate(45)"><rect width="6" height="6" fill="#fff"/><line x1="0" y1="0" x2="0" y2="6" stroke="#e8385c" stroke-width="2"/></pattern>
<pattern id="hk" patternUnits="userSpaceOnUse" width="6" height="6" patternTransform="rotate(45)"><rect width="6" height="6" fill="#fff"/><line x1="0" y1="0" x2="0" y2="6" stroke="#000" stroke-width="2.2"/></pattern>
</defs>
<rect x="122" y="843" width="795" height="3" fill="#0e4b6b"/>
<rect x="130.1" y="843.6" width="37.8" height="2.0" fill="url(#hg)" stroke="#6cd26a" stroke-width="1"/>
<rect x="196.6" y="839.5" width="37.8" height="6.1" fill="url(#hg)" stroke="#6cd26a" stroke-width="1"/>
<rect x="263.0" y="837.6" width="37.8" height="8.0" fill="url(#hg)" stroke="#6cd26a" stroke-width="1"/>
<rect x="329.5" y="834.6" width="37.8" height="11.0" fill="url(#hg)" stroke="#6cd26a" stroke-width="1"/>
<rect x="395.4" y="844.9" width="38.8" height="2" rx="1" fill="#e8385c"/>
<rect x="461.9" y="844.9" width="38.8" height="2" rx="1" fill="#e8385c"/>
<rect x="528.8" y="845.4" width="37.8" height="2.6" fill="url(#hr)" stroke="#e8385c" stroke-width="1"/>
<rect x="594.8" y="844.9" width="38.8" height="2" rx="1" fill="#e8385c"/>
<rect x="661.7" y="843.6" width="37.8" height="2.0" fill="url(#hg)" stroke="#6cd26a" stroke-width="1"/>
<rect x="728.2" y="842.8" width="37.8" height="2.8" fill="url(#hg)" stroke="#6cd26a" stroke-width="1"/>
<rect x="794.6" y="836.6" width="37.8" height="9.0" fill="url(#hg)" stroke="#6cd26a" stroke-width="1"/>
<rect x="861.1" y="843.6" width="37.8" height="2.0" fill="url(#hg)" stroke="#6cd26a" stroke-width="1"/>
<rect x="408.2" y="892.3" width="17.6" height="13" fill="#0c4a6a"/>
<rect x="484.7" y="892.8" width="16.6" height="12.4" fill="url(#hk)" stroke="#555" stroke-width="1.3"/>
</svg>
<div class="t" style="left:-51.0px;width:400px;text-align:center;top:830.22px;font-size:10.6px;line-height:10.6px;color:#333;font-weight:bold;transform:scaleX(0.84);">+112.92</div>
<div class="t" style="left:15.5px;width:400px;text-align:center;top:825.82px;font-size:10.6px;line-height:10.6px;color:#333;font-weight:bold;transform:scaleX(0.84);">+321.31</div>
<div class="t" style="left:81.9px;width:400px;text-align:center;top:824.12px;font-size:10.6px;line-height:10.6px;color:#333;font-weight:bold;transform:scaleX(0.84);">+456.16</div>
<div class="t" style="left:148.4px;width:400px;text-align:center;top:820.92px;font-size:10.6px;line-height:10.6px;color:#333;font-weight:bold;transform:scaleX(0.84);">+648.61</div>
<div class="t" style="left:214.8px;width:400px;text-align:center;top:853.42px;font-size:10.6px;line-height:10.6px;color:#333;font-weight:bold;transform:scaleX(0.84);">-88.82</div>
<div class="t" style="left:281.2px;width:400px;text-align:center;top:853.42px;font-size:10.6px;line-height:10.6px;color:#333;font-weight:bold;transform:scaleX(0.84);">-79.02</div>
<div class="t" style="left:347.7px;width:400px;text-align:center;top:855.62px;font-size:10.6px;line-height:10.6px;color:#333;font-weight:bold;transform:scaleX(0.84);">-207.15</div>
<div class="t" style="left:414.1px;width:400px;text-align:center;top:853.42px;font-size:10.6px;line-height:10.6px;color:#333;font-weight:bold;transform:scaleX(0.84);">-98.30</div>
<div class="t" style="left:480.6px;width:400px;text-align:center;top:830.82px;font-size:10.6px;line-height:10.6px;color:#333;font-weight:bold;transform:scaleX(0.84);">+105.04</div>
<div class="t" style="left:547.1px;width:400px;text-align:center;top:829.82px;font-size:10.6px;line-height:10.6px;color:#333;font-weight:bold;transform:scaleX(0.84);">+166.82</div>
<div class="t" style="left:613.5px;width:400px;text-align:center;top:823.92px;font-size:10.6px;line-height:10.6px;color:#333;font-weight:bold;transform:scaleX(0.84);">+534.55</div>
<div class="t" style="left:680.0px;width:400px;text-align:center;top:830.82px;font-size:10.6px;line-height:10.6px;color:#333;font-weight:bold;transform:scaleX(0.84);">+127.42</div>
<div class="t" style="left:430.4px;top:894.73px;font-size:11.3px;line-height:11.3px;color:#32363a;">Actual</div>
<div class="t" style="left:507.0px;top:894.73px;font-size:11.3px;line-height:11.3px;color:#32363a;">Forecast</div>
<div class="t" style="left:972.5px;top:281.13px;font-size:15.9px;line-height:15.9px;color:#32363a;font-weight:bold;">Influencer Data for Cash Out</div>
<div class="r" style="left:966px;top:302px;width:932px;height:6px;background:#000;border:1px solid #fff;box-sizing:border-box;"></div>
<div class="r" style="left:967px;top:316px;width:544px;height:372px;background:#fff;"></div>
<div class="t" style="left:974.6px;top:323.96px;font-size:15.6px;line-height:15.6px;color:#32363a;">Milk Price, Sugar Price and Energy Price (Forecast)</div>
<div class="t" style="left:974.0px;top:354.16px;font-size:11px;line-height:11px;color:#32363a;">in EUR</div>
<svg class="r" style="left:995.5px;top:342.3px" width="600" height="30" viewBox="995.5 342.3 600 30">
<line x1="1015.2" y1="349.3" x2="1015.2" y2="363.8" stroke="#32363a" stroke-width="1"/>
<line x1="1038.7" y1="349.3" x2="1038.7" y2="363.8" stroke="#32363a" stroke-width="1"/>
<g fill="#000" shape-rendering="crispEdges"><rect x="1022" y="350" width="3" height="3"/><rect x="1026" y="354" width="3" height="3"/><rect x="1029" y="358" width="3" height="3"/></g><g stroke="#333" stroke-width="1" fill="none" shape-rendering="crispEdges"><polyline points="1023.5,353 1023.5,355.5 1026,355.5"/><polyline points="1027.5,357 1027.5,359.5 1029,359.5"/></g>
</svg>
<div class="t" style="left:1045.6px;top:352.65px;font-size:11.9px;line-height:11.9px;color:#0a6ec0;font-weight:bold;">1 Filter</div>
<svg class="r" style="left:967px;top:370px" width="544" height="300" viewBox="967 370 544 300">
<rect x="1079.4" y="375.5" width="17.2" height="13.2" fill="#5899da"/>
<rect x="1172.8" y="375.5" width="17.2" height="13.2" fill="#e8743b"/>
<rect x="1275" y="375.5" width="17.2" height="13.2" fill="#19a979"/>
<rect x="1011" y="547" width="114" height="95" fill="#5899da"/>
<rect x="1183" y="539.2" width="114" height="102.8" fill="#e8743b"/>
<rect x="1355" y="436.2" width="114" height="205.8" fill="#19a979"/>
<rect x="982" y="640.7" width="516" height="3" fill="#c9c9c9"/>
</svg>
<div class="t" style="left:1101.5px;top:378.00px;font-size:11.5px;line-height:11.5px;color:#32363a;">Milk Price</div>
<div class="t" style="left:1194.5px;top:378.00px;font-size:11.5px;line-height:11.5px;color:#32363a;">Sugar Price</div>
<div class="t" style="left:1296.5px;top:378.00px;font-size:11.5px;line-height:11.5px;color:#32363a;">Energy Price / MWh</div>
<div class="t" style="left:868.0px;width:400px;text-align:center;top:531.86px;font-size:11.8px;line-height:11.8px;color:#333;font-weight:bold;">284</div>
<div class="t" style="left:1040.0px;width:400px;text-align:center;top:523.76px;font-size:11.8px;line-height:11.8px;color:#333;font-weight:bold;">310</div>
<div class="t" style="left:1212.0px;width:400px;text-align:center;top:420.86px;font-size:11.8px;line-height:11.8px;color:#333;font-weight:bold;">619</div>
<div class="t" style="left:1040.0px;width:400px;text-align:center;top:652.10px;font-size:13px;line-height:13px;color:#333;">2022</div>
<div class="r" style="left:1526px;top:316px;width:371px;height:371px;background:#fff;"></div>
<div class="t" style="left:1533.3px;top:324.19px;font-size:15.4px;line-height:15.4px;color:#32363a;">Salary Expenses (Forecast)</div>
<svg class="r" style="left:1528.6px;top:340.7px" width="600" height="30" viewBox="1528.6 340.7 600 30">
<line x1="1548.3" y1="347.7" x2="1548.3" y2="362.2" stroke="#32363a" stroke-width="1"/>
<line x1="1600.3" y1="347.7" x2="1600.3" y2="362.2" stroke="#32363a" stroke-width="1"/>
<line x1="1716.3" y1="347.7" x2="1716.3" y2="362.2" stroke="#32363a" stroke-width="1"/>
<g fill="#000" shape-rendering="crispEdges"><rect x="1532" y="349" width="3" height="3"/><rect x="1536" y="353" width="3" height="3"/><rect x="1539" y="357" width="3" height="3"/></g><g stroke="#333" stroke-width="1" fill="none" shape-rendering="crispEdges"><polyline points="1533.5,352 1533.5,354.5 1536,354.5"/><polyline points="1537.5,356 1537.5,358.5 1539,358.5"/></g>
</svg>
<div class="t" style="left:1554.7px;top:351.05px;font-size:11.9px;line-height:11.9px;color:#0a6ec0;font-weight:bold;">1 Filter</div>
<div class="t" style="left:1607.2px;top:351.05px;font-size:11.9px;line-height:11.9px;color:#0a6ec0;font-weight:bold;">Explorer Available</div>
<div class="t" style="left:1723.6px;top:351.05px;font-size:11.9px;line-height:11.9px;color:#0a6ec0;font-weight:bold;">1 Variance</div>
<div class="t" style="left:1531.7px;top:370.97px;font-size:14px;line-height:14px;color:#32363a;">2022</div>
<div class="t" style="left:1531.2px;top:489.12px;font-size:32px;line-height:32px;color:#32363a;">€16,102 k</div>
<div class="t" style="left:1531.2px;top:525.41px;font-size:18.3px;line-height:18.3px;color:#ee3d62;">+6.12%, Δ PY in%</div>
<div class="t" style="left:1531.2px;top:547.87px;font-size:18.6px;line-height:18.6px;color:#32363a;letter-spacing:0.65px;">Salary Expenses</div>
<div class="t" style="left:971.5px;top:710.23px;font-size:15.9px;line-height:15.9px;color:#32363a;font-weight:bold;">Influencer Data for Cash In</div>
<div class="r" style="left:966px;top:734px;width:932px;height:6px;background:#000;border:1px solid #fff;box-sizing:border-box;"></div>
<div class="r" style="left:965px;top:748px;width:932px;height:190px;background:#fff;border-radius:3px 3px 0 0;"></div>
<div class="t" style="left:979.1px;top:756.16px;font-size:15.6px;line-height:15.6px;color:#32363a;">Sales Budget for Budget</div>
<div class="t" style="left:979.1px;top:785.60px;font-size:10.7px;line-height:10.7px;color:#32363a;">in Thousand EUR</div>
<svg class="r" style="left:1051.1px;top:774px" width="600" height="30" viewBox="1051.1 774 600 30">
<line x1="1070.8" y1="781.0" x2="1070.8" y2="795.5" stroke="#32363a" stroke-width="1"/>
<line x1="1093.8" y1="781.0" x2="1093.8" y2="795.5" stroke="#32363a" stroke-width="1"/>
<g fill="#000" shape-rendering="crispEdges"><rect x="1077" y="782" width="3" height="3"/><rect x="1081" y="786" width="3" height="3"/><rect x="1084" y="790" width="3" height="3"/></g><g stroke="#333" stroke-width="1" fill="none" shape-rendering="crispEdges"><polyline points="1078.5,785 1078.5,787.5 1081,787.5"/><polyline points="1082.5,789 1082.5,791.5 1084,791.5"/></g>
</svg>
<div class="t" style="left:1102.0px;top:784.35px;font-size:11.9px;line-height:11.9px;color:#0a6ec0;font-weight:bold;">1 Filter</div>
<svg class="r" style="left:965px;top:800px" width="932" height="138" viewBox="965 800 932 138">
<polyline fill="none" stroke="#fcd45f" stroke-width="2.3" stroke-linejoin="round" points="1022.7,875.1 1096.8,883 1170.8,859.8 1243.5,848.7 1317.6,830.2 1391.6,828.8 1464.4,841.3 1538.4,870.3 1612.5,890.4 1686,883.8 1759.2,886.2 1833.3,885.7"/>
<circle cx="1022.7" cy="875.1" r="5.2" fill="#fcd45f"/>
<circle cx="1096.8" cy="883" r="5.2" fill="#fcd45f"/>
<circle cx="1170.8" cy="859.8" r="5.2" fill="#fcd45f"/>
<circle cx="1243.5" cy="848.7" r="5.2" fill="#fcd45f"/>
<circle cx="1317.6" cy="830.2" r="5.2" fill="#fcd45f"/>
<circle cx="1391.6" cy="828.8" r="5.2" fill="#fcd45f"/>
<circle cx="1464.4" cy="841.3" r="5.2" fill="#fcd45f"/>
<circle cx="1538.4" cy="870.3" r="5.2" fill="#fcd45f"/>
<circle cx="1612.5" cy="890.4" r="5.2" fill="#fcd45f"/>
<circle cx="1686" cy="883.8" r="5.2" fill="#fcd45f"/>
<circle cx="1759.2" cy="886.2" r="5.2" fill="#fcd45f"/>
<circle cx="1833.3" cy="885.7" r="5.2" fill="#fcd45f"/>
</svg>
<div class="t" style="left:823.7px;width:400px;text-align:center;top:858.76px;font-size:11.8px;line-height:11.8px;color:#333;font-weight:bold;">9,960</div>
<div class="t" style="left:897.8px;width:400px;text-align:center;top:866.66px;font-size:11.8px;line-height:11.8px;color:#333;font-weight:bold;">9,436</div>
<div class="t" style="left:971.8px;width:400px;text-align:center;top:843.46px;font-size:11.8px;line-height:11.8px;color:#333;font-weight:bold;">10,941</div>
<div class="t" style="left:1044.5px;width:400px;text-align:center;top:832.36px;font-size:11.8px;line-height:11.8px;color:#333;font-weight:bold;">11,691</div>
<div class="t" style="left:1118.6px;width:400px;text-align:center;top:813.86px;font-size:11.8px;line-height:11.8px;color:#333;font-weight:bold;">12,898</div>
<div class="t" style="left:1192.6px;width:400px;text-align:center;top:812.46px;font-size:11.8px;line-height:11.8px;color:#333;font-weight:bold;">12,990</div>
<div class="t" style="left:1265.4px;width:400px;text-align:center;top:824.96px;font-size:11.8px;line-height:11.8px;color:#333;font-weight:bold;">12,158</div>
<div class="t" style="left:1339.4px;width:400px;text-align:center;top:853.96px;font-size:11.8px;line-height:11.8px;color:#333;font-weight:bold;">10,255</div>
<div class="t" style="left:1413.5px;width:400px;text-align:center;top:874.06px;font-size:11.8px;line-height:11.8px;color:#333;font-weight:bold;">8,955</div>
<div class="t" style="left:1487.0px;width:400px;text-align:center;top:867.46px;font-size:11.8px;line-height:11.8px;color:#333;font-weight:bold;">9,384</div>
<div class="t" style="left:1560.2px;width:400px;text-align:center;top:869.86px;font-size:11.8px;line-height:11.8px;color:#333;font-weight:bold;">9,210</div>
<div class="t" style="left:1634.3px;width:400px;text-align:center;top:869.36px;font-size:11.8px;line-height:11.8px;color:#333;font-weight:bold;">9,245</div>
<div class="r" style="left:0;top:937px;width:1920px;height:1px;background:#222;"></div>
</body></html>
